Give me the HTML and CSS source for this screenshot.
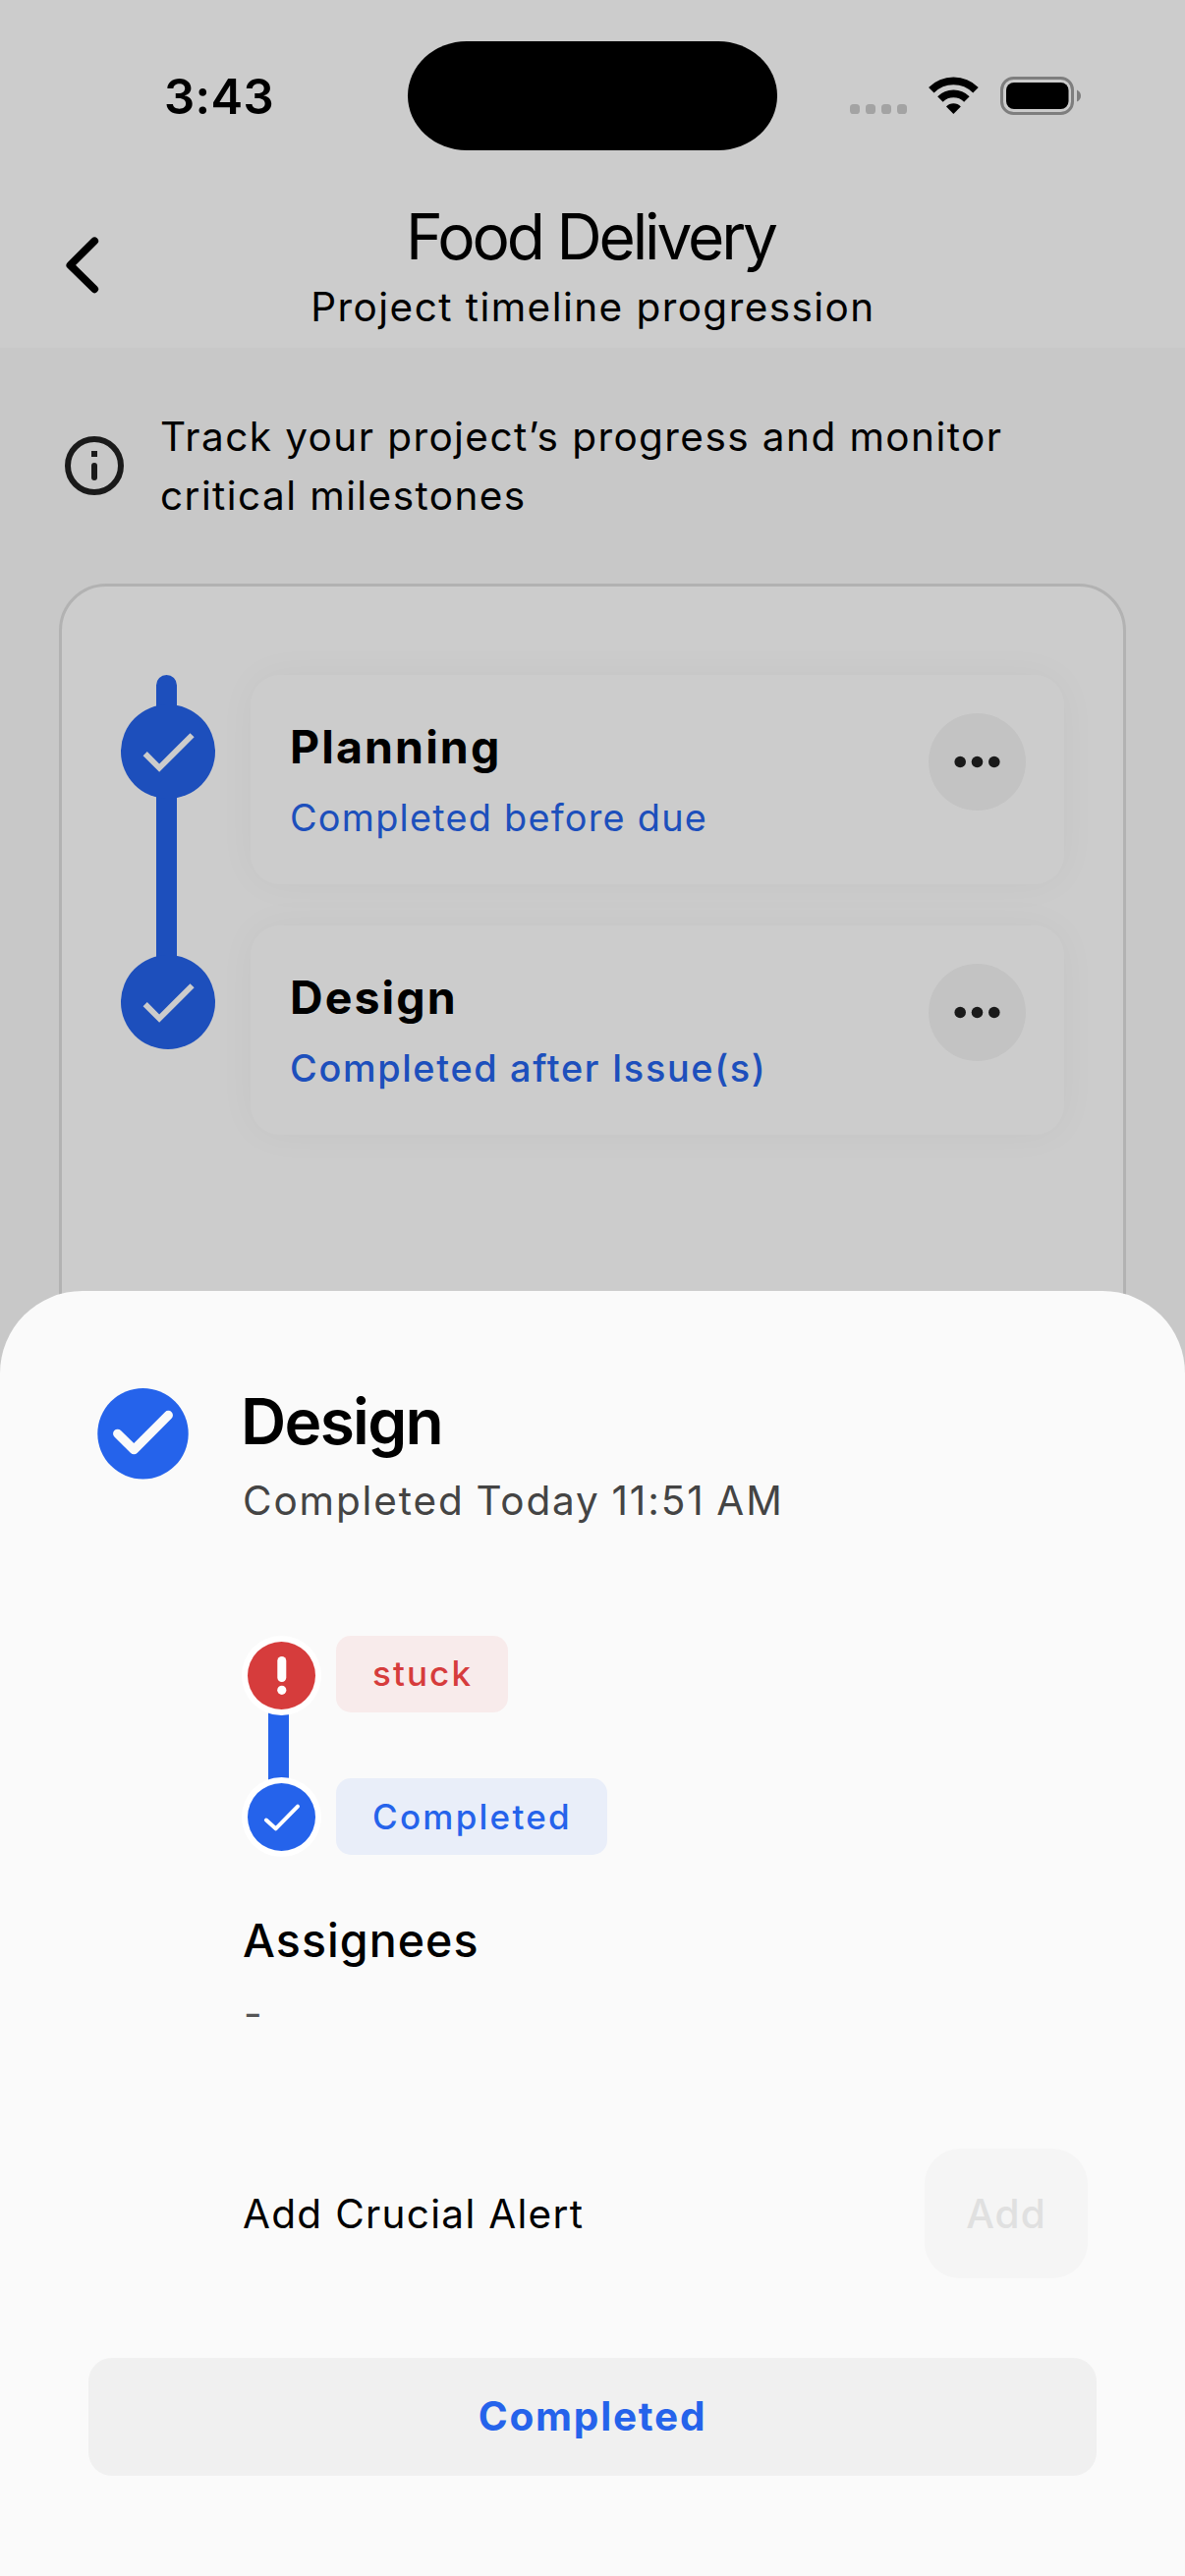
FILE: index.html
```html
<!DOCTYPE html>
<html lang="en">
<head>
<meta charset="utf-8">
<title>Food Delivery</title>
<link rel="stylesheet" href="styles.css">
</head>
<body>
<div class="phone">
  <div class="status-bar">
    <div class="time">3:43</div>
    <div class="island"></div>
    <div class="status-icons">
      <svg width="58" height="39" viewBox="0 0 58 39" fill="#cccccc">
        <rect x="0" y="28" width="10" height="10" rx="3.6"/><rect x="16" y="28" width="10" height="10" rx="3.6"/><rect x="32" y="28" width="10" height="10" rx="3.6"/><rect x="48" y="28" width="10" height="10" rx="3.6"/>
      </svg>
      <svg width="51" height="39" viewBox="0 0 51 39" fill="none" stroke="#000">
        <path d="M2.8 13.8A31.9 31.9 0 0 1 48 13.8" stroke-width="7.7"/>
        <path d="M11.9 22.9A19.1 19.1 0 0 1 38.9 22.9" stroke-width="7.8"/>
        <path d="M25.4 38L18 30.4A10.3 10.3 0 0 1 32.8 30.4Z" fill="#000" stroke="none"/>
      </svg>
      <svg width="82" height="39" viewBox="0 0 82 39">
        <rect x="1.5" y="1.5" width="72" height="36" rx="12" fill="none" stroke="#9e9e9e" stroke-width="3"/>
        <rect x="6" y="6" width="63.500" height="27" rx="8"/>
        <path d="M78 13.500Q82 15.500 82 19.500T78 25.500Z" fill="#9e9e9e"/>
      </svg>
    </div>
  </div>

  <header class="header">
    <svg class="back" width="120" height="160" viewBox="0 0 120 160" fill="none" stroke="#000" stroke-width="7.800" stroke-linecap="round" stroke-linejoin="round">
      <path d="M96.200 51.300L71.400 75.900L96.200 100.300"/>
    </svg>
    <div class="heading">
      <h1 class="title">Food Delivery</h1>
      <p class="subtitle">Project timeline progression</p>
    </div>
  </header>

  <main class="content">
    <div class="hint">
      <svg width="60" height="60" viewBox="0 0 60 60" fill="#212121">
        <circle cx="30" cy="30" r="27" fill="none" stroke="#212121" stroke-width="6"/>
        <rect x="27" y="15" width="6" height="6"/>
        <rect x="27" y="27" width="6" height="18" rx="3"/>
      </svg>
      <p class="hint-text">Track your project’s progress and monitor<br>critical milestones</p>
    </div>

    <section class="timeline">
      <div class="stage">
        <svg class="marker" width="96" height="255" viewBox="0 0 96 255" fill="#2563eb">
          <path d="M36 255V10.500A10.500 10.500 0 0 1 57 10.500V255Z"/>
          <circle cx="48" cy="78" r="48"/>
          <path transform="translate(12.500 42.600) scale(2.960)" fill="#fff" d="M9 16.170L4.830 12l-1.420 1.410L9 19 21 7l-1.410-1.410z"/>
        </svg>
        <div class="card">
          <div>
            <h2 class="card-title">Planning</h2>
            <p class="card-note">Completed before due</p>
          </div>
          <svg class="more" width="99" height="99" viewBox="0 0 99 99" fill="#212121">
            <circle cx="49.500" cy="49.500" r="49.500" fill="#f4f4f4"/>
            <circle cx="32.200" cy="49.500" r="5.800"/><circle cx="49.500" cy="49.500" r="5.800"/><circle cx="66.800" cy="49.500" r="5.800"/>
          </svg>
        </div>
      </div>
      <div class="stage">
        <svg class="marker" width="96" height="255" viewBox="0 0 96 255" fill="#2563eb">
          <path d="M36 0H57V78H36Z"/>
          <circle cx="48" cy="78" r="48"/>
          <path transform="translate(12.500 42.600) scale(2.960)" fill="#fff" d="M9 16.170L4.830 12l-1.420 1.410L9 19 21 7l-1.410-1.410z"/>
        </svg>
        <div class="card">
          <div>
            <h2 class="card-title">Design</h2>
            <p class="card-note card-note-strong">Completed after Issue(s)</p>
          </div>
          <svg class="more" width="99" height="99" viewBox="0 0 99 99" fill="#212121">
            <circle cx="49.500" cy="49.500" r="49.500" fill="#f4f4f4"/>
            <circle cx="32.200" cy="49.500" r="5.800"/><circle cx="49.500" cy="49.500" r="5.800"/><circle cx="66.800" cy="49.500" r="5.800"/>
          </svg>
        </div>
      </div>
    </section>
  </main>

  <div class="scrim"></div>

  <section class="sheet">
    <div class="sheet-head">
      <svg class="sheet-icon" width="93" height="93" viewBox="0 0 93 93">
        <circle cx="46.500" cy="46.200" r="46.200" fill="#2563eb"/>
        <path d="M20.700 46.300L37.300 62.600L72.300 27.500" fill="none" stroke="#fafafa" stroke-width="9.300" stroke-linecap="round" stroke-linejoin="round"/>
      </svg>
      <div>
        <h2 class="sheet-title">Design</h2>
        <p class="sheet-date">Completed Today 11:51 AM</p>
      </div>
    </div>

    <div class="details">
      <div class="step step-linked">
        <svg width="81" height="144" viewBox="0 0 81 144">
          <rect x="27" y="70" width="21" height="74" fill="#2563eb"/>
          <circle cx="40.500" cy="40.500" r="40.500" fill="#fff"/>
          <circle cx="40.500" cy="40.500" r="34.500" fill="#d63c3c"/>
          <rect x="36.300" y="21" width="9" height="26" rx="4.500" fill="#fff"/>
          <circle cx="40.800" cy="55.300" r="4.600" fill="#fff"/>
        </svg>
        <span class="tag tag-stuck">stuck</span>
      </div>
      <div class="step">
        <svg width="81" height="81" viewBox="0 0 81 81">
          <rect x="27" y="0" width="21" height="40" fill="#2563eb"/>
          <circle cx="40.500" cy="40.500" r="40.500" fill="#fff"/>
          <circle cx="40.500" cy="40.500" r="34.500" fill="#2563eb"/>
          <path d="M24.900 43.600L34.600 52.300L57 29.700" fill="none" stroke="#fff" stroke-width="4" stroke-linecap="round" stroke-linejoin="round"/>
        </svg>
        <span class="tag tag-done">Completed</span>
      </div>

      <h3 class="label">Assignees</h3>
      <p class="value">-</p>

      <div class="alert-row">
        <span class="alert-text">Add Crucial Alert</span>
        <button class="add" disabled>Add</button>
      </div>
    </div>

    <button class="submit">Completed</button>
  </section>
</div>
</body>
</html>
```
FILE: styles.css
```css
* { box-sizing: border-box; }

body, h1, h2, h3, p { margin: 0; font-weight: 400; }

body { font-family: "Inter", "Noto Sans", sans-serif; color: #000; }

svg { display: block; flex: none; }

button { border: 0; padding: 0; font-family: inherit; }

.phone {
  position: relative;
  width: 1206px;
  height: 2622px;
  overflow: hidden;
  background: #fafafa;
}

/* status bar */
.status-bar {
  display: grid;
  grid-template-columns: 415px 376px 1fr;
  align-items: center;
  height: 194px;
  background: #fff;
}

.time {
  padding: 3px 0 0 167px;
  font-size: 49px;
  font-weight: 600;
  line-height: 60px;
  letter-spacing: 0.36px;
}

.island {
  height: 111px;
  border-radius: 60px / 55.5px;
  background: #000;
}

.status-icons {
  display: flex;
  gap: 22px;
  padding: 1px 0 0 74px;
}

/* header */
.header {
  display: grid;
  grid-template-columns: 120px 1fr 120px;
  height: 160px;
  background: #fff;
}

.heading { padding-top: 7px; text-align: center; }

.title {
  padding-right: 4px;
  font-size: 64px;
  line-height: 80px;
  letter-spacing: -3.15px;
}

.subtitle {
  margin-top: 7px;
  padding-left: 1px;
  font-size: 40.5px;
  line-height: 50px;
  letter-spacing: 1.44px;
}

/* content */
.content { padding: 60px 60px 0; }

.hint {
  display: flex;
  align-items: center;
  gap: 37px;
  height: 120px;
  padding-left: 6px;
}

.hint-text {
  padding-top: 2px;
  font-size: 40.5px;
  line-height: 60px;
  letter-spacing: 1.43px;
  white-space: nowrap;
}

.timeline {
  height: 1400px;
  margin-top: 60px;
  padding: 90px 60px;
  border: 3px solid #dfdfdf;
  border-radius: 48px;
  background: #fff;
}

.stage {
  display: flex;
  align-items: flex-start;
  gap: 36px;
  height: 255px;
}

.marker { position: relative; z-index: 1; }

.card {
  display: flex;
  justify-content: space-between;
  align-items: flex-start;
  flex: 1;
  height: 213px;
  padding: 39px 39px 0 40px;
  border-radius: 30px;
  background: #fff;
  box-shadow: 0 0 40px rgba(0, 0, 0, 0.035);
}

.card-title {
  margin-top: 6px;
  font-size: 46.5px;
  font-weight: 650;
  line-height: 56px;
  letter-spacing: 2.1px;
}

.card-note {
  margin-top: 20px;
  font-size: 37.8px;
  line-height: 48px;
  letter-spacing: 1.25px;
  color: #2563eb;
}

.card-note-strong { font-weight: 500; letter-spacing: 1.67px; }

.scrim {
  position: absolute;
  inset: 0;
  z-index: 2;
  background: rgba(0, 0, 0, 0.2);
}

/* bottom sheet */
.sheet {
  position: absolute;
  z-index: 3;
  left: 0;
  right: 0;
  bottom: 0;
  height: 1308px;
  padding: 93px 90px 0;
  border-radius: 84px 84px 0 0;
  background: #fafafa;
}

.sheet-head {
  display: flex;
  align-items: flex-start;
  gap: 55px;
  padding-left: 9px;
}

.sheet-icon { margin-top: 6px; }

.sheet-title {
  margin-left: -2px;
  font-size: 64px;
  font-weight: 600;
  line-height: 80px;
  letter-spacing: -1.7px;
}

.sheet-date {
  margin-top: 16px;
  font-size: 40.5px;
  line-height: 50px;
  letter-spacing: 1.87px;
  word-spacing: -1.5px;
  color: #444;
}

.details { padding: 112px 9px 0 157px; }

.step {
  display: flex;
  align-items: flex-start;
  gap: 15px;
  height: 81px;
  margin-left: -1px;
}

.step-linked { height: 144px; }

.tag {
  height: 78px;
  padding-left: 37px;
  border-radius: 15px;
  font-size: 35px;
  font-weight: 500;
  line-height: 78px;
}

.tag-stuck {
  width: 175px;
  background: #f8ebeb;
  color: #d63c3c;
  line-height: 76px;
  letter-spacing: 2.1px;
}

.tag-done {
  width: 276px;
  margin-top: 1px;
  background: #e9eef9;
  color: #2563eb;
  letter-spacing: 2.25px;
}

.label {
  margin-top: 57px;
  font-size: 46.5px;
  font-weight: 500;
  line-height: 56px;
  letter-spacing: 1.05px;
}

.value {
  margin: 22px 0 0 1px;
  font-size: 40.5px;
  line-height: 50px;
  color: #555;
}

.alert-row {
  display: flex;
  justify-content: space-between;
  align-items: center;
  margin-top: 112px;
}

.alert-text {
  padding-top: 2px;
  font-size: 40.5px;
  line-height: 50px;
  letter-spacing: 1.3px;
}

.add {
  width: 166px;
  height: 132px;
  border-radius: 36px;
  background: #f5f5f5;
  color: #e0e0e0;
  font-size: 40.5px;
  font-weight: 500;
  letter-spacing: 1.08px;
}

.submit {
  display: block;
  width: 100%;
  height: 120px;
  margin-top: 81px;
  padding-bottom: 2px;
  border-radius: 24px;
  background: #f0f0f0;
  color: #2563eb;
  font-size: 40.5px;
  font-weight: 650;
  letter-spacing: 1.8px;
}
```
